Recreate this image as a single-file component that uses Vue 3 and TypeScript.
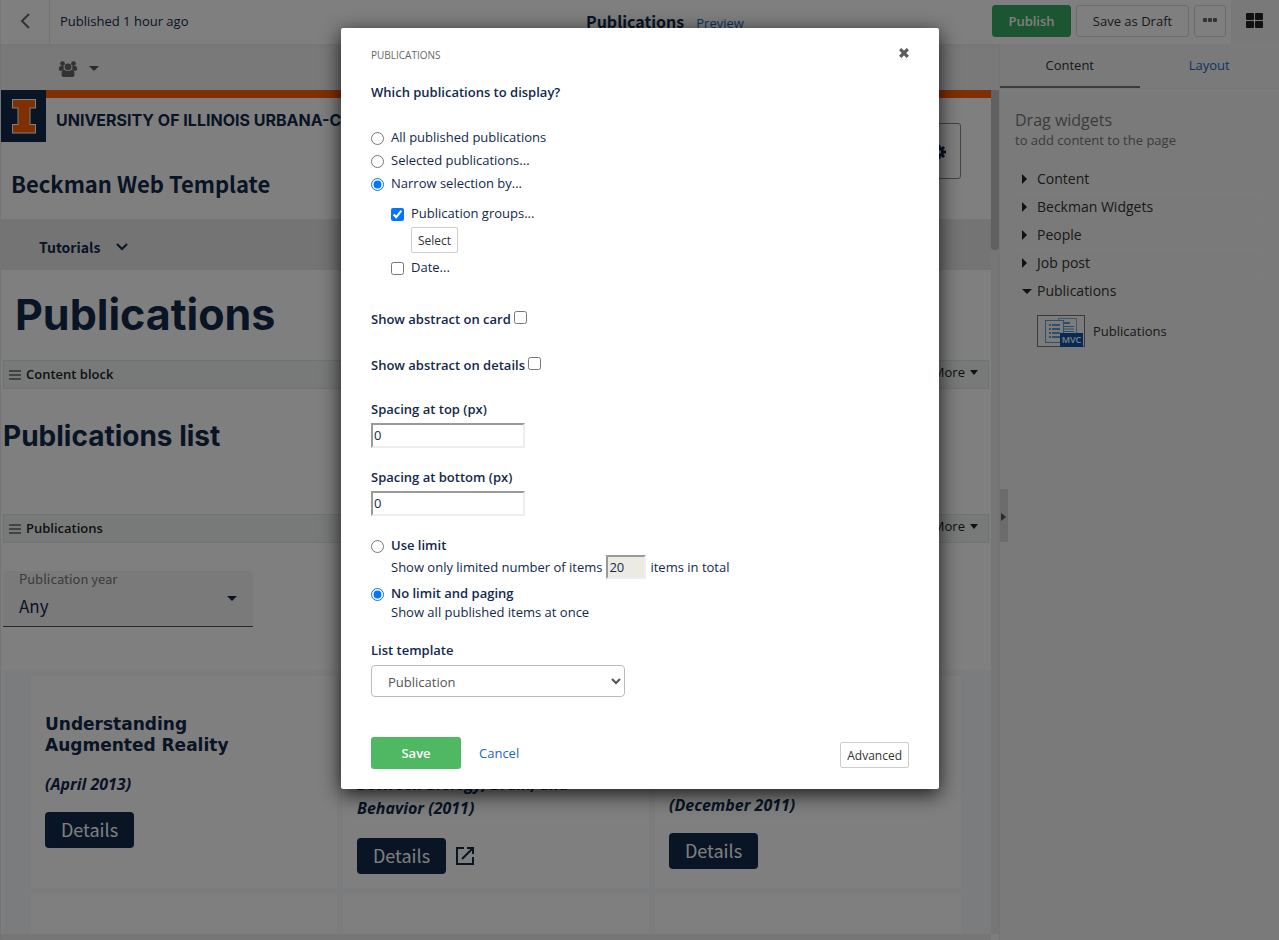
<script setup lang="ts">
import { ref } from 'vue'

interface Card {
  titleLines: string[]
  titleRows: number
  date: string[]
  external: boolean
}

const TITLE_LINE = 21

const widgetGroups = [
  { name: 'Content', open: false },
  { name: 'Beckman Widgets', open: false },
  { name: 'People', open: false },
  { name: 'Job post', open: false },
  { name: 'Publications', open: true },
]

const cards: Card[] = [
  { titleLines: ['Understanding', 'Augmented Reality'], titleRows: 2, date: ['(April 2013)'], external: false },
  { titleLines: [], titleRows: 2, date: ['Between Biology, Brain, and', 'Behavior (2011)'], external: true },
  { titleLines: [], titleRows: 3, date: ['(December 2011)'], external: false },
]

const selection = ref('narrow')
const byGroups = ref(true)
const byDate = ref(false)
const abstractOnCard = ref(false)
const abstractOnDetails = ref(false)
const spacingTop = ref('0')
const spacingBottom = ref('0')
const limitMode = ref('none')
const limit = ref('20')
const template = ref('Publication')
</script>

<template>
  <div class="app">
    <header class="topbar">
      <div class="topbar-left">
        <button class="back" aria-label="Back">
          <svg width="12" height="18" viewBox="0 0 12 18"><path d="M10 2 3 9l7 7" fill="none" stroke="#666" stroke-width="2" /></svg>
        </button>
        <span class="status">Published 1 hour ago</span>
      </div>
      <div class="topbar-title">
        <h2>Publications</h2>
        <a href="#">Preview</a>
      </div>
      <div class="topbar-actions">
        <button class="btn publish">Publish</button>
        <button class="btn draft">Save as Draft</button>
        <button class="btn dots" aria-label="More actions">
          <svg width="14" height="4" viewBox="0 0 14 4" fill="#666"><rect width="4" height="4" rx="1" /><rect x="5" width="4" height="4" rx="1" /><rect x="10" width="4" height="4" rx="1" /></svg>
        </button>
        <button class="grid-toggle" aria-label="Widgets">
          <svg width="18" height="15" viewBox="0 0 18 15" fill="#222">
            <rect width="8" height="7" rx="1" /><rect x="9" width="8" height="7" rx="1" />
            <rect y="8" width="8" height="7" rx="1" /><rect x="9" y="8" width="8" height="7" rx="1" />
          </svg>
        </button>
      </div>
    </header>

    <div class="workspace">
      <main class="editor">
        <div class="tools">
          <svg width="18" height="16" viewBox="0 0 18 16" fill="#666">
            <circle cx="3.5" cy="2.6" r="2.4" /><circle cx="14.5" cy="2.6" r="2.4" />
            <path d="M0 9V7q0-2 2-2h2.6Q4.300 6.800 5.200 8.200 3.800 8.400 3.200 9.800H1Q0 9.800 0 9zM18 9V7q0-2-2-2h-2.600q.3 1.800-.6 3.200 1.400.2 2 1.600H17q1 0 1-.8z" />
            <circle cx="9" cy="5.800" r="3.400" />
            <path d="M2.500 14v-1.600q0-3.400 2.700-3.600Q9 11.400 12.800 8.800q2.700.2 2.700 3.600V14q0 2-2 2h-9q-2 0-2-2z" />
          </svg>
          <svg width="10" height="5" viewBox="0 0 10 5"><path d="M0 0h10L5 5z" fill="#555" /></svg>
        </div>

        <div class="viewport">
          <div class="page">
            <div class="brandbar">
              <svg class="logo" width="45" height="52" viewBox="0 0 45 52">
                <rect width="45" height="52" fill="#13294b" />
                <path d="M11 9h24v9.500h-5.500v15.500h5.500v9.500H11v-9.500h5.500V18.500H11z" fill="#fff" />
                <path d="M12 10h22v7.500h-5.500V35H34v7.500H12V35h5.500V17.500H12z" fill="#ff5f05" />
              </svg>
              <div class="brandbar-text">University of Illinois Urbana-Champaign</div>
            </div>
            <div class="sitehead">
              <div class="sitename">Beckman Web Template</div>
              <button class="settings" aria-label="Settings">
                <svg width="14" height="14" viewBox="0 0 14 14">
                  <circle cx="7" cy="7" r="3.500" fill="none" stroke="#13294b" stroke-width="3" />
                  <path d="M7 0v3M7 11v3M0 7h3M11 7h3M2 2l2 2M10 10l2 2M12 2l-2 2M4 10l-2 2" stroke="#13294b" stroke-width="3" />
                </svg>
              </button>
            </div>
            <nav class="sitenav">
              <a href="#">Tutorials</a>
              <svg width="12" height="8" viewBox="0 0 12 8"><path d="m1 1 5 5 5-5" fill="none" stroke="#13294b" stroke-width="2" /></svg>
            </nav>
            <h1>Publications</h1>

            <div class="widgetbar">
              <svg width="12" height="10" viewBox="0 0 12 10"><path d="M0 1h12M0 5h12M0 9h12" stroke="#888" stroke-width="2" /></svg>
              <span class="widget-name">Content block</span>
              <button class="more">More <svg width="8" height="5" viewBox="0 0 8 5"><path d="M0 0h8L4 5z" fill="#222" /></svg></button>
            </div>
            <h2 class="listtitle">Publications list</h2>
            <div class="widgetbar">
              <svg width="12" height="10" viewBox="0 0 12 10"><path d="M0 1h12M0 5h12M0 9h12" stroke="#888" stroke-width="2" /></svg>
              <span class="widget-name">Publications</span>
              <button class="more">More <svg width="8" height="5" viewBox="0 0 8 5"><path d="M0 0h8L4 5z" fill="#222" /></svg></button>
            </div>

            <div class="filter">
              <div class="filter-text">
                <label for="year">Publication year</label>
                <select id="year"><option>Any</option></select>
              </div>
              <svg width="10" height="5" viewBox="0 0 10 5"><path d="M0 0h10L5 5z" fill="#13294b" /></svg>
            </div>

            <div class="cards">
              <article v-for="(card, i) in cards" :key="i" class="card">
                <h3 :style="{ minHeight: card.titleRows * TITLE_LINE + 'px' }">
                  <span v-for="line in card.titleLines" :key="line">{{ line }}</span>
                </h3>
                <p><span v-for="line in card.date" :key="line">{{ line }}</span></p>
                <div class="card-actions">
                  <a href="#" class="details">Details</a>
                  <a v-if="card.external" href="#" class="external" aria-label="Open link">
                    <svg width="18" height="18" viewBox="0 0 18 18" fill="none" stroke="#13294b" stroke-width="2"><path d="M8 1H1v16h16v-7M11 1h6v6M17 1 6 12" /></svg>
                  </a>
                </div>
              </article>
              <article class="card" /><article class="card" /><article class="card" />
            </div>
          </div>
          <div class="vscroll"><div class="thumb" /></div>
          <div class="hscroll" />
          <div class="corner" />
        </div>
      </main>

      <aside class="sidebar">
        <div class="tabs">
          <button class="tab active">Content</button>
          <button class="tab">Layout</button>
        </div>
        <div class="side-body">
          <h4>Drag widgets</h4>
          <p>to add content to the page</p>
          <ul>
            <li v-for="g in widgetGroups" :key="g.name">
              <button>
                <span class="arrow">
                  <svg v-if="g.open" width="10" height="5" viewBox="0 0 10 5"><path d="M0 0h10L5 5z" fill="#222" /></svg>
                  <svg v-else width="5" height="10" viewBox="0 0 5 10"><path d="M0 0v10l5-5z" fill="#222" /></svg>
                </span>
                {{ g.name }}
              </button>
            </li>
          </ul>
          <div class="widget">
            <svg width="48" height="32" viewBox="0 0 48 32">
              <rect x=".5" y=".5" width="47" height="31" fill="#f8f8f8" stroke="#777" />
              <rect x="21.500" y="3.500" width="18" height="22" fill="#f8f8f8" stroke="#7fb0d8" />
              <path d="M26 8h7M26 11.500h11M26 14h11M26 16.500h11" stroke="#5c9fd4" />
              <path d="M26 8h7" stroke="#5c9fd4" stroke-width="2" />
              <rect x="8.500" y="5.500" width="18" height="22" fill="#f8f8f8" stroke="#5c9fd4" />
              <path d="M12 10h2M15 10h8M12 14h2M15 14h8M12 18h2M15 18h8M12 22h2M15 22h8" stroke="#5c9fd4" stroke-width="2" />
              <rect x="23" y="18" width="23" height="14" fill="#0d55b0" />
              <text x="34.500" y="28" text-anchor="middle" font-size="9" font-weight="600" fill="#fff">MVC</text>
            </svg>
            Publications
          </div>
        </div>
        <button class="handle" aria-label="Collapse panel">
          <svg width="5" height="8" viewBox="0 0 5 8"><path d="M0 0v8l5-4z" fill="#555" /></svg>
        </button>
      </aside>
    </div>

    <div class="backdrop">
      <form class="dialog" role="dialog" aria-labelledby="dialog-title" @submit.prevent>
        <div class="dialog-head">
          <span id="dialog-title">PUBLICATIONS</span>
          <button type="button" class="close" aria-label="Close">
            <svg width="10" height="10" viewBox="0 0 10 10"><path d="m1.200 1.200 7.600 7.600M8.800 1.200 1.200 8.800" stroke="#5c5c5c" stroke-width="3.200" /></svg>
          </button>
        </div>

        <h3 class="question">Which publications to display?</h3>
        <label class="choice"><input v-model="selection" type="radio" name="selection" value="all" />All published publications</label>
        <label class="choice"><input v-model="selection" type="radio" name="selection" value="selected" />Selected publications...</label>
        <label class="choice"><input v-model="selection" type="radio" name="selection" value="narrow" />Narrow selection by...</label>
        <div class="nested">
          <label class="choice"><input v-model="byGroups" type="checkbox" />Publication groups...</label>
          <button type="button" class="small select">Select</button>
          <label class="choice"><input v-model="byDate" type="checkbox" />Date...</label>
        </div>

        <div class="toggles">
          <label class="toggle">Show abstract on card<input v-model="abstractOnCard" type="checkbox" /></label>
          <label class="toggle">Show abstract on details<input v-model="abstractOnDetails" type="checkbox" /></label>
        </div>

        <div class="field">
          <label for="space-top">Spacing at top (px)</label>
          <input id="space-top" v-model="spacingTop" type="text" />
        </div>
        <div class="field">
          <label for="space-bottom">Spacing at bottom (px)</label>
          <input id="space-bottom" v-model="spacingBottom" type="text" />
        </div>

        <div class="limits">
          <label class="choice strong"><input v-model="limitMode" type="radio" name="limit" value="limit" />Use limit</label>
          <div class="note tall">
            <label for="limit">Show only limited number of items</label>
            <input id="limit" v-model="limit" type="text" disabled />
            <span>items in total</span>
          </div>
          <label class="choice strong"><input v-model="limitMode" type="radio" name="limit" value="none" />No limit and paging</label>
          <div class="note">Show all published items at once</div>
        </div>

        <div class="field">
          <label for="template">List template</label>
          <select id="template" v-model="template"><option>Publication</option></select>
        </div>

        <div class="dialog-foot">
          <button type="submit" class="save">Save</button>
          <a href="#">Cancel</a>
          <button type="button" class="small advanced">Advanced</button>
        </div>
      </form>
    </div>
  </div>
</template>

<style>
body {
  margin: 0;
}
</style>

<style scoped>
.app,
.app * {
  box-sizing: border-box;
}
.app {
  position: relative;
  display: flex;
  flex-direction: column;
  height: 100vh;
  overflow: hidden;
  background: #fff;
  color: #13294b;
  font: 13px/20px "Open Sans", "Noto Sans", sans-serif;
}
svg {
  display: block;
  flex: none;
}
h1, h2, h3, h4, p, ul {
  margin: 0;
  padding: 0;
}
button {
  font: inherit;
  color: inherit;
  background: none;
  border: 0;
  padding: 0;
}
a {
  color: #1a66c2;
  text-decoration: none;
}

.topbar {
  display: grid;
  grid-template-columns: 1fr 406px auto;
  height: 44px;
  flex: none;
  border-left: 1px solid #eee;
}
.topbar-left {
  display: flex;
  align-items: center;
}
.back {
  display: flex;
  align-items: center;
  justify-content: center;
  width: 49px;
  height: 44px;
  padding-bottom: 2px;
  border-right: 1px solid #e4e4e4;
}
.status {
  margin-left: 10px;
  padding-bottom: 2px;
}
.topbar-title {
  display: flex;
  align-items: baseline;
  gap: 12px;
  padding-top: 9px;
}
.topbar-title h2 {
  font: 700 16px/24px "Noto Sans CJK SC", sans-serif;
}
.topbar-actions {
  display: flex;
  align-items: center;
  gap: 5px;
}
.btn {
  height: 32px;
  margin-bottom: 2px;
  border: 1px solid #d8d8d8;
  border-radius: 3px;
  color: #333;
}
.publish {
  width: 79px;
  background: #38ab63;
  border-color: #38ab63;
  color: #fff;
  font-weight: 600;
}
.draft {
  width: 113px;
}
.dots {
  display: flex;
  align-items: center;
  justify-content: center;
  width: 32px;
  padding-bottom: 2px;
}
.grid-toggle {
  display: flex;
  align-items: center;
  justify-content: center;
  width: 48px;
  height: 44px;
  padding-bottom: 4px;
  background: #f3f3f3;
}

.workspace {
  display: flex;
  flex: 1;
  min-height: 0;
}
.editor {
  display: flex;
  flex-direction: column;
  flex: 1;
  min-width: 0;
  border-left: 1px solid #e8e8e8;
}
.tools {
  display: flex;
  align-items: center;
  gap: 12px;
  height: 46px;
  flex: none;
  padding: 3px 0 0 58px;
  background: linear-gradient(#ececec, #f3f3f3 5px);
}
.viewport {
  display: grid;
  grid-template: minmax(0, 1fr) 6px / minmax(0, 1fr) 8px;
  flex: 1;
  min-height: 0;
}
.page {
  overflow: hidden;
}
.vscroll {
  background: #ededed;
}
.thumb {
  height: 160px;
  border-radius: 0 0 3px 3px;
  background: #c1c1c1;
}
.hscroll {
  background: #ededed;
}
.corner {
  background: #fafafa;
}

.brandbar {
  display: flex;
  height: 52px;
}
.brandbar-text {
  flex: 1;
  padding: 10px 0 0 10px;
  border-top: 8px solid #ff5f05;
  overflow: hidden;
  white-space: nowrap;
  text-transform: uppercase;
  font: 700 16px/24px Inter, sans-serif;
}
.sitehead {
  display: flex;
  align-items: flex-start;
  justify-content: space-between;
  height: 77px;
  padding: 25px 30px 0 10px;
}
.sitename {
  font: 700 22px/32px "Noto Sans CJK SC", sans-serif;
}
.settings {
  display: flex;
  align-items: center;
  justify-content: flex-end;
  width: 60px;
  height: 56px;
  margin-top: -44px;
  padding: 2px 14px 0 0;
  border: 1px solid #888;
  border-radius: 3px;
}
.sitenav {
  display: flex;
  align-items: center;
  gap: 16px;
  height: 51px;
  padding: 5px 0 0 38px;
  background: #e8e8e8;
}
.sitenav a {
  color: #13294b;
  font: 700 14px/24px "Noto Sans CJK SC", sans-serif;
}
h1 {
  padding: 16px 0 18px 14px;
  font: 700 43px/56px Inter, sans-serif;
}
.widgetbar {
  display: flex;
  align-items: center;
  height: 29px;
  margin: 0 2px;
  padding: 0 10px 0 5px;
  border: 1px solid #dfe6e6;
  background: #f1f5f4;
  color: #222;
}
.widget-name {
  flex: 1;
  margin-left: 5px;
  padding-bottom: 2px;
  font-weight: 600;
}
.more {
  display: flex;
  align-items: center;
  gap: 5px;
  padding-bottom: 5px;
}
.listtitle {
  padding: 27px 0 58px 2px;
  font: 700 28px/40px Inter, sans-serif;
}
.filter {
  display: flex;
  align-items: center;
  width: 250px;
  height: 56px;
  margin: 28px 2px 43px;
  padding: 0 16px;
  border-bottom: 1px solid #555;
  border-radius: 4px 4px 0 0;
  background: #f5f5f5;
}
.filter-text {
  display: flex;
  flex-direction: column;
  flex: 1;
  height: 56px;
}
.filter label {
  color: #777;
  font: 13px/16px "Noto Sans CJK SC", sans-serif;
}
.filter select {
  appearance: none;
  height: 38px;
  padding: 0;
  border: 0;
  background: none;
  color: #13294b;
  font: 17px/24px "Noto Sans CJK SC", sans-serif;
}
.cards {
  display: grid;
  grid-template-columns: repeat(3, 1fr);
  grid-auto-rows: 212px;
  gap: 6px;
  margin-left: 2px;
  padding: 6px 30px 0 28px;
  background: #f5f8fd;
}
.card {
  padding: 38px 14px 0;
  background: #fff;
}
.card h3 {
  font: 700 17px/21px "DejaVu Sans", sans-serif;
}
.card h3 span,
.card p span {
  display: block;
}
.card p {
  margin: 16px 0;
  font: italic 700 16px/24px "Open Sans", sans-serif;
}
.card-actions {
  display: flex;
  align-items: center;
}
.details {
  width: 89px;
  height: 36px;
  border-radius: 4px;
  background: #13294b;
  color: #fff;
  text-align: center;
  font: 18px/34px "Noto Sans CJK SC", sans-serif;
}
.external {
  display: flex;
  align-items: center;
  height: 40px;
  padding-left: 10px;
}

.sidebar {
  position: relative;
  width: 280px;
  flex: none;
  border-left: 1px solid #e8e8e8;
  background: #f5f5f5;
}
.tabs {
  display: flex;
  height: 45px;
  border-bottom: 1px solid #ececec;
}
.tab {
  width: 140px;
  height: 44px;
  border-bottom: 2px solid transparent;
  color: #1a66c2;
}
.tab.active {
  color: #333;
  border-bottom-color: #777;
}
.side-body {
  padding: 21px 15px 0;
  color: #333;
}
.side-body h4 {
  color: #777;
  font: 16px/20px "Open Sans", sans-serif;
}
.side-body p {
  color: #777;
}
.side-body ul {
  margin-top: 15px;
  list-style: none;
}
.side-body li {
  border: 1px solid #f7f7f7;
  height: 28px;
}
.side-body li button {
  display: flex;
  align-items: center;
  height: 26px;
  font-size: 14px;
}
.arrow {
  width: 15px;
  margin-left: 6px;
}
.widget {
  display: flex;
  align-items: center;
  gap: 8px;
  margin: 10px 0 0 22px;
}
.handle {
  position: absolute;
  top: 445px;
  left: 0;
  display: flex;
  align-items: center;
  width: 8px;
  height: 53px;
  padding: 2px 0 0 1px;
  background: #d8d8d8;
}

.backdrop {
  position: absolute;
  inset: 0;
  display: flex;
  align-items: flex-start;
  justify-content: center;
  padding: 28px 0 0 1px;
  background: rgba(0, 0, 0, 0.5);
}
.dialog {
  width: 598px;
  padding: 18px 30px 20px;
  border-radius: 2px;
  background: #fff;
  box-shadow: 0 5px 20px rgba(0, 0, 0, 0.8);
}
.dialog input[type='radio'],
.dialog input[type='checkbox'] {
  width: 13px;
  height: 13px;
  margin: 0;
}
.dialog-head {
  display: flex;
  justify-content: space-between;
  color: #666;
  font-size: 10px;
  line-height: 18px;
}
.close {
  height: 13px;
}
.question {
  margin: 18px 0 24px;
  font-size: 13px;
  font-weight: 600;
}
.choice {
  display: flex;
  align-items: center;
  gap: 7px;
  height: 23px;
  padding-bottom: 1px;
}
.dialog .choice input {
  margin-top: 3px;
}
.nested {
  margin: 7px 0 30px 20px;
}
.small {
  display: block;
  height: 26px;
  padding: 1px 6px 0;
  border: 1px solid #ccc;
  border-radius: 2px;
  color: #333;
  font-size: 12px;
}
.select {
  margin: 2px 0 3px 20px;
}
.toggles {
  display: flex;
  flex-direction: column;
  align-items: flex-start;
  gap: 26px;
  margin-bottom: 24px;
}
.toggle {
  display: flex;
  align-items: center;
  gap: 3px;
  font-weight: 600;
}
.dialog .toggle input {
  margin-bottom: 3px;
}
.field {
  display: flex;
  flex-direction: column;
  align-items: flex-start;
  gap: 4px;
  margin-bottom: 19px;
}
.field label,
.strong {
  font-weight: 600;
}
input[type='text'] {
  height: 25px;
  padding: 0 1px 1px;
  border: 2px inset #eee;
  border-radius: 0;
  color: #13294b;
  font: 13px/20px "Open Sans", sans-serif;
}
.field input {
  width: 154px;
}
.limits {
  margin-bottom: 19px;
}
.limits .choice {
  height: 20px;
  padding-bottom: 0;
}
.note {
  padding-left: 20px;
  line-height: 18px;
}
.note.tall {
  display: flex;
  align-items: center;
  gap: 4px;
  margin-bottom: 4px;
}
.note input {
  width: 40px;
  height: 24px;
  background: #ebebe4;
}
.field select {
  width: 254px;
  height: 32px;
  margin-top: 1px;
  padding: 1px 0 0 12px;
  border: 1px solid #bbb;
  border-radius: 4px;
  background: #fff;
  color: #555;
  font: inherit;
}
.dialog-foot {
  display: flex;
  align-items: center;
  margin-top: 40px;
}
.save {
  width: 90px;
  height: 32px;
  margin-right: 18px;
  border-radius: 3px;
  background: #4eb863;
  color: #fff;
  font-weight: 600;
}
.advanced {
  margin: 4px 0 0 auto;
}
</style>
